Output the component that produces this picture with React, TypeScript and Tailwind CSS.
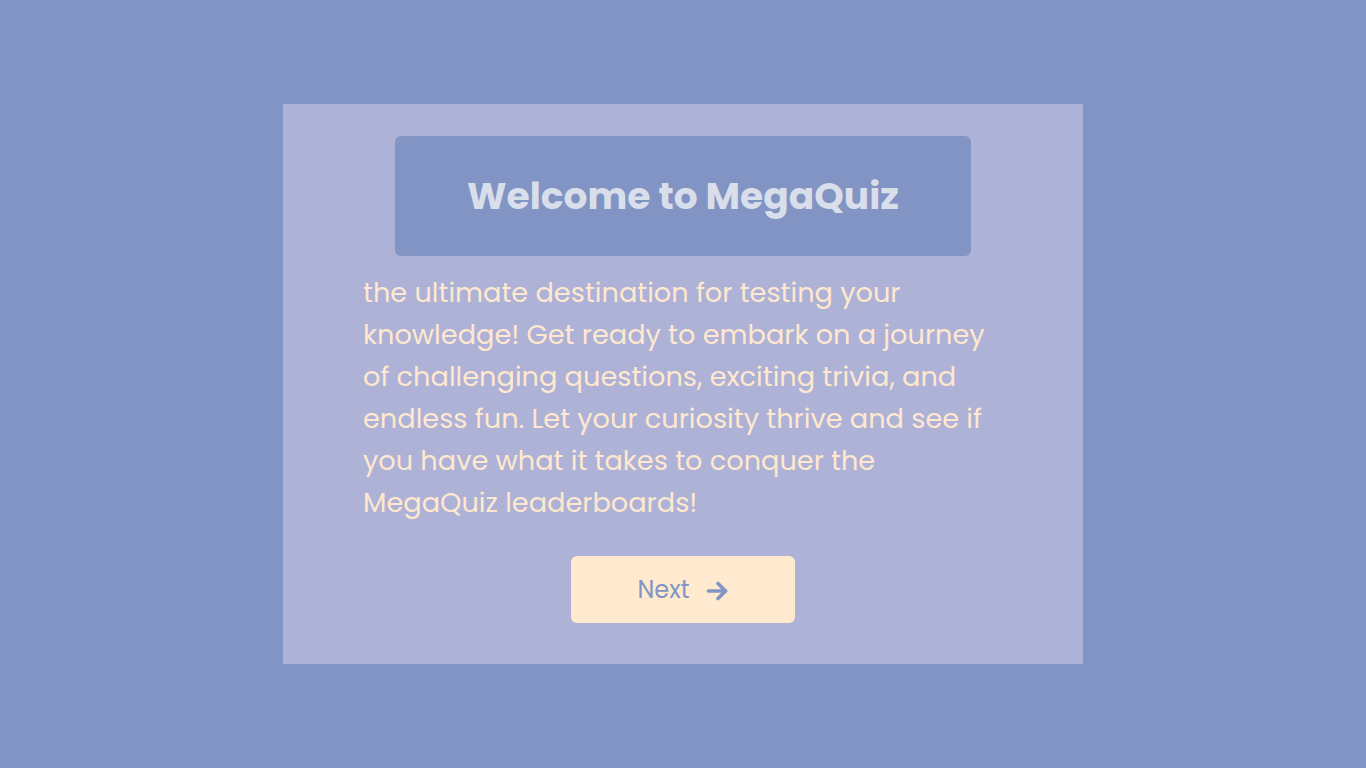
import React from 'react';

function ArrowIcon() {
  return (
    <svg width="22" height="20" viewBox="0 0 22 20" fill="none" stroke="currentColor" strokeWidth={3.6} strokeLinecap="round" strokeLinejoin="round">
      <path d="M2.5 10h17" />
      <path d="M12 2.5l7.5 7.5-7.5 7.5" />
    </svg>
  );
}

export default function App() {
  return (
    <div className="min-h-screen w-full bg-[#8194c3] flex items-center justify-center font-['Poppins','Open_Sans',sans-serif]">
      {/* Card */}
      <div className="w-[800px] h-[560px] bg-[#adb2d6] flex flex-col items-center pt-8">
        <div className="w-[576px] h-[120px] bg-[#8194c3] rounded-md flex items-center justify-center">
          <h1 className="text-[37.6px] font-bold text-[#d9deeb]">Welcome to MegaQuiz</h1>
        </div>

        <p className="w-[640px] mt-[16px] text-[27.2px] leading-[42px] text-[#ffe8cf]">
          the ultimate destination for testing your knowledge! Get ready to embark on a journey of challenging
          questions, exciting trivia, and endless fun. Let your curiosity thrive and see if you have what it takes to
          conquer the MegaQuiz leaderboards!
        </p>

        <button className="mt-[32px] w-[224px] h-[67px] bg-[#ffeacf] rounded-md flex items-center justify-center gap-[17px] text-[#8194c3] text-[24px]">
          <span>Next</span>
          <span className="mt-[2px]"><ArrowIcon /></span>
        </button>
      </div>
    </div>
  );
}
